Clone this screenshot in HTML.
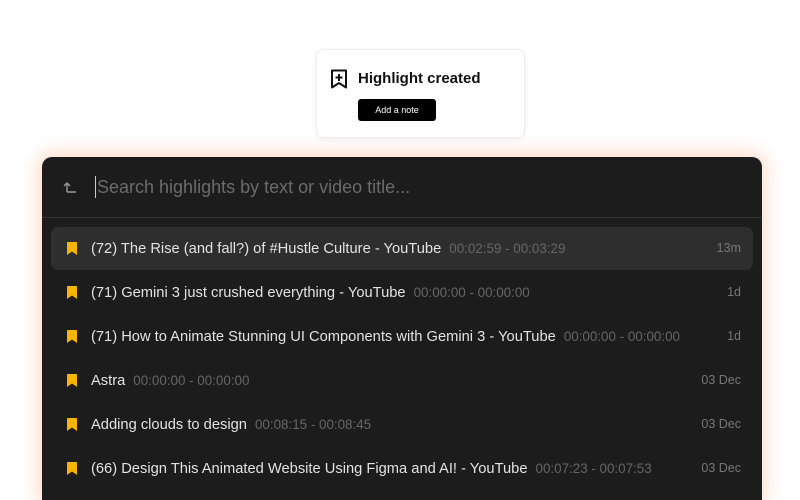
<!DOCTYPE html>
<html style="width:800px;height:500px;overflow:hidden"><head><meta charset="utf-8"><style>
*{margin:0;padding:0;box-sizing:border-box}
body{width:800px;height:500px;background:#fff;font-family:"Liberation Sans",sans-serif;position:relative;overflow:hidden}
.toast{position:absolute;left:316px;top:49px;width:209px;height:89px;background:#fff;border:1px solid #eee;border-radius:7px;box-shadow:0 2px 6px rgba(0,0,0,.06)}
.toast svg{position:absolute;left:13px;top:19px}
.toast .t{position:absolute;left:41px;top:20px;font-size:15px;font-weight:bold;color:#111}
.toast .b{position:absolute;left:41px;top:49px;width:78px;height:22px;background:#000;color:#fff;border-radius:3px;font-size:9px;text-align:center;line-height:22px}
.panel{position:absolute;left:42px;top:157px;width:720px;height:343px;background:#1c1c1c;border-radius:10px 10px 0 0;box-shadow:0 0 18px 4px rgba(255,150,100,.35)}
.search{height:61px;border-bottom:1px solid #333;position:relative}
.search svg{position:absolute;left:21px;top:23px}
.search .ph{position:absolute;left:53px;top:19px;font-size:18px;color:#6b6b6b;border-left:1px solid #ccc;padding-left:1px;line-height:22px}
.row{position:absolute;left:9px;width:702px;height:43px;border-radius:7px}
.row.sel{background:#2e2e2e}
.row svg{position:absolute;left:16px;top:15px}
.row .tt{position:absolute;left:40px;top:14px;font-size:14.7px;color:#e2e2e2;white-space:nowrap}
.row .tt span{color:#666;font-size:13.4px;margin-left:8px}
.row .d{position:absolute;right:12px;top:14px;font-size:12.5px;color:#777}
</style></head><body>
<div class="toast">
<svg width="18" height="20" viewBox="0 0 18 20"><path d="M2 1.5h14v17l-7-4.5-7 4.5z" fill="none" stroke="#111" stroke-width="2" stroke-linejoin="round"/><path d="M9 5v7M5.5 8.5h7" stroke="#111" stroke-width="2"/></svg>
<div class="t">Highlight created</div>
<div class="b">Add a note</div>
</div>
<div class="panel">
<div class="search">
<svg width="14" height="14" viewBox="0 0 14 14"><path d="M4 12V3M1 6l3-3 3 3M4 12h9" fill="none" stroke="#999" stroke-width="1.4"/></svg>
<div class="ph">Search highlights by text or video title...</div>
</div>
<div class="row sel" style="top:70px"><svg width="10" height="13"><path d="M0 0h10v13l-5-3.5L0 13z" fill="#f5b400"/></svg><div class="tt">(72) The Rise (and fall?) of #Hustle Culture - YouTube<span>00:02:59 - 00:03:29</span></div><div class="d">13m</div></div>
<div class="row" style="top:114px"><svg width="10" height="13"><path d="M0 0h10v13l-5-3.5L0 13z" fill="#f5b400"/></svg><div class="tt">(71) Gemini 3 just crushed everything - YouTube<span>00:00:00 - 00:00:00</span></div><div class="d">1d</div></div>
<div class="row" style="top:158px"><svg width="10" height="13"><path d="M0 0h10v13l-5-3.5L0 13z" fill="#f5b400"/></svg><div class="tt">(71) How to Animate Stunning UI Components with Gemini 3 - YouTube<span>00:00:00 - 00:00:00</span></div><div class="d">1d</div></div>
<div class="row" style="top:202px"><svg width="10" height="13"><path d="M0 0h10v13l-5-3.5L0 13z" fill="#f5b400"/></svg><div class="tt">Astra<span>00:00:00 - 00:00:00</span></div><div class="d">03 Dec</div></div>
<div class="row" style="top:246px"><svg width="10" height="13"><path d="M0 0h10v13l-5-3.5L0 13z" fill="#f5b400"/></svg><div class="tt">Adding clouds to design<span>00:08:15 - 00:08:45</span></div><div class="d">03 Dec</div></div>
<div class="row" style="top:290px"><svg width="10" height="13"><path d="M0 0h10v13l-5-3.5L0 13z" fill="#f5b400"/></svg><div class="tt">(66) Design This Animated Website Using Figma and AI! - YouTube<span>00:07:23 - 00:07:53</span></div><div class="d">03 Dec</div></div>
</div>
</body></html>
